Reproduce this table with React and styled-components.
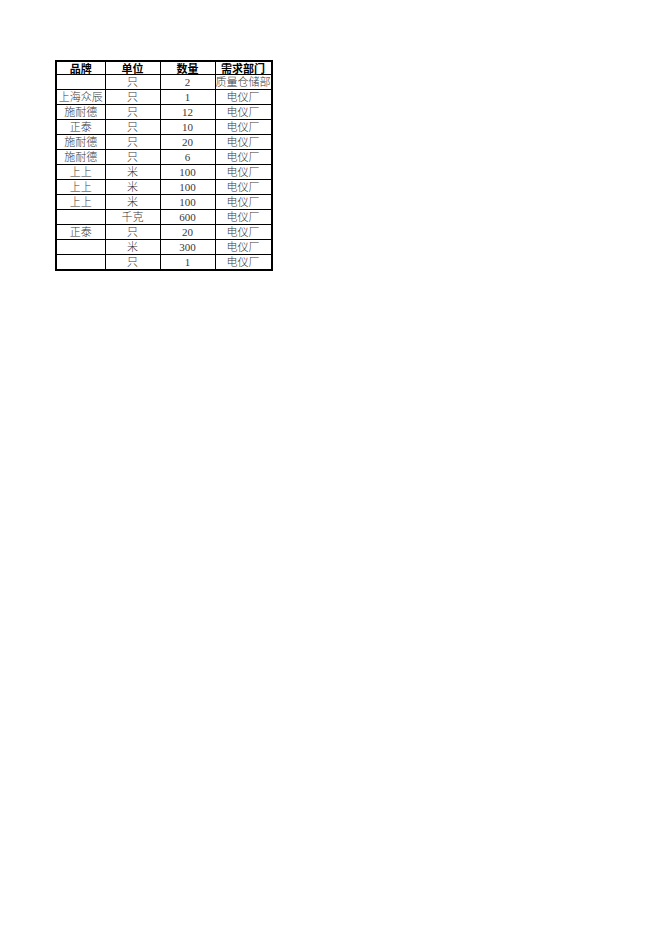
import React from 'react';
import styled, { createGlobalStyle } from 'styled-components';

const GlobalStyle = createGlobalStyle`
  html, body {
    margin: 0;
    padding: 0;
    background: #fff;
  }
`;

const columns = [
  { key: 'brand', title: '品牌', width: 49 },
  { key: 'unit', title: '单位', width: 55 },
  { key: 'qty', title: '数量', width: 55 },
  { key: 'dept', title: '需求部门', width: 56 },
];

const rows = [
  ['', '只', '2', '质量仓储部'],
  ['上海众辰', '只', '1', '电仪厂'],
  ['施耐德', '只', '12', '电仪厂'],
  ['正泰', '只', '10', '电仪厂'],
  ['施耐德', '只', '20', '电仪厂'],
  ['施耐德', '只', '6', '电仪厂'],
  ['上上', '米', '100', '电仪厂'],
  ['上上', '米', '100', '电仪厂'],
  ['上上', '米', '100', '电仪厂'],
  ['', '千克', '600', '电仪厂'],
  ['正泰', '只', '20', '电仪厂'],
  ['', '米', '300', '电仪厂'],
  ['', '只', '1', '电仪厂'],
];

const Sheet = styled.div`
  padding: 60px 0 0 55px;
`;

const Table = styled.table`
  border-collapse: collapse;
  table-layout: fixed;
  border: 2px solid #000;
`;

const HeadCell = styled.th`
  height: 12px;
  padding: 0;
  border: 1px solid #000;
  font-family: 'Noto Sans CJK SC', 'Liberation Sans', sans-serif;
  font-size: 11px;
  font-weight: 700;
  line-height: 12px;
  color: #000;
  text-align: center;
`;

const Cell = styled.td`
  height: 14px;
  padding: 0;
  border: 1px solid #000;
  font-family: 'Liberation Serif', 'Noto Sans CJK SC', serif;
  font-size: 11px;
  font-weight: 300;
  line-height: 14px;
  color: #3a3a3a;
  text-align: center;
  white-space: nowrap;
  overflow: hidden;
`;

export default function App() {
  return (
    <>
      <GlobalStyle />
      <Sheet>
        <Table>
          <colgroup>
            {columns.map((c) => (
              <col key={c.key} style={{ width: c.width }} />
            ))}
          </colgroup>
          <thead>
            <tr>
              {columns.map((c) => (
                <HeadCell key={c.key}>{c.title}</HeadCell>
              ))}
            </tr>
          </thead>
          <tbody>
            {rows.map((r, i) => (
              <tr key={i}>
                {r.map((v, j) => (
                  <Cell key={j}>{v}</Cell>
                ))}
              </tr>
            ))}
          </tbody>
        </Table>
      </Sheet>
    </>
  );
}
